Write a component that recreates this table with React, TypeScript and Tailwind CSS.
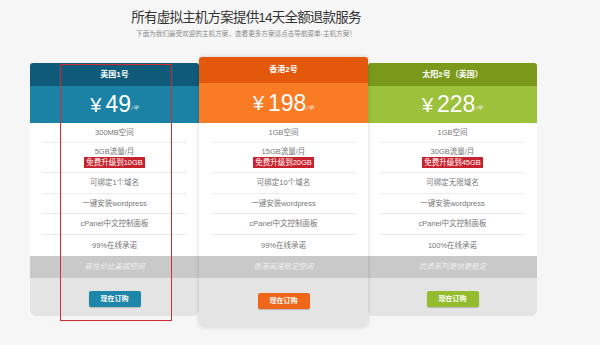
import React from 'react';

interface Plan {
  name: string;
  price: string;
  space: string;
  traffic: string;
  upgrade: string;
  domains: string;
  uptime: string;
  slogan: string;
  featured?: boolean;
  headerBg: string;
  priceBg: string;
  buttonBg: string;
}

const plans: Plan[] = [
  {
    name: '美国1号',
    price: '49',
    space: '300MB空间',
    traffic: '5GB流量/月',
    upgrade: '免费升级到10GB',
    domains: '可绑定1个域名',
    uptime: '99%在线承诺',
    slogan: '高性价比美国空间',
    headerBg: 'bg-[#0e5a78]',
    priceBg: 'bg-[#1b82a5]',
    buttonBg: 'bg-[#1e86a8]',
  },
  {
    name: '香港2号',
    price: '198',
    space: '1GB空间',
    traffic: '15GB流量/月',
    upgrade: '免费升级到20GB',
    domains: '可绑定10个域名',
    uptime: '99%在线承诺',
    slogan: '香港高速稳定空间',
    featured: true,
    headerBg: 'bg-[#e3580a]',
    priceBg: 'bg-[#f97b24]',
    buttonBg: 'bg-[#f0661a]',
  },
  {
    name: '太阳2号（美国）',
    price: '228',
    space: '1GB空间',
    traffic: '30GB流量/月',
    upgrade: '免费升级到45GB',
    domains: '可绑定无限域名',
    uptime: '100%在线承诺',
    slogan: '优质系列更快更稳定',
    headerBg: 'bg-[#7a991b]',
    priceBg: 'bg-[#9cc13b]',
    buttonBg: 'bg-[#93bc2e]',
  },
];

function PlanCard({ plan }: { plan: Plan }) {
  const f = plan.featured;
  return (
    <div
      className={`flex flex-col overflow-hidden rounded-t-[3px] rounded-b-[6px] ${
        f ? 'w-[169px] relative z-10 shadow-[0_0_4px_rgba(0,0,0,0.18)]' : 'w-[169px] mt-[6px]'
      }`}
    >
      {/* header */}
      <div className={`${plan.headerBg} ${f ? 'h-[26px]' : 'h-[23px]'} flex items-center justify-center text-white text-[8px] font-bold`}>
        {plan.name}
      </div>

      {/* price */}
      <div className={`${plan.priceBg} ${f ? 'h-[40px]' : 'h-[37px]'} flex items-center justify-center text-white`}>
        <span className="text-[20px] leading-none">¥</span>
        <span className="text-[23px] leading-none ml-[4px]">{plan.price}</span>
        <span className="text-[6px] italic self-end mb-[10px] opacity-80">/年</span>
      </div>

      {/* features */}
      <div className="bg-white px-[12px] text-[7.5px] text-[#777]">
        <div className="h-[20px] flex items-center justify-center border-b border-[#ebebeb]">{plan.space}</div>
        <div className="h-[30px] flex flex-col items-center justify-center border-b border-[#ebebeb] leading-[10px]">
          <span>{plan.traffic}</span>
          <span className="bg-[#c7232e] text-white px-[2px] leading-[11px]">{plan.upgrade}</span>
        </div>
        <div className="h-[21px] flex items-center justify-center border-b border-[#ebebeb]">{plan.domains}</div>
        <div className="h-[20px] flex items-center justify-center border-b border-[#ebebeb]">一键安装wordpress</div>
        <div className="h-[21px] flex items-center justify-center border-b border-[#ebebeb]">cPanel中文控制面板</div>
        <div className="h-[21px] flex items-center justify-center">{plan.uptime}</div>
      </div>

      {/* slogan band */}
      <div className="h-[22px] bg-[#c9c9c9] flex items-center justify-center text-[7.5px] italic text-[#eeeeee]">
        {plan.slogan}
      </div>

      {/* order */}
      <div className={`bg-[#e4e4e4] flex justify-center ${f ? 'h-[49px] pt-[15px]' : 'h-[38px] pt-[13px]'}`}>
        <button className={`${plan.buttonBg} h-[16px] w-[52px] rounded-[2px] text-white text-[7px] font-bold shadow-[0_1px_1px_rgba(0,0,0,0.2)]`}>
          现在订购
        </button>
      </div>
    </div>
  );
}

export default function App() {
  return (
    <div
      className="w-[600px] h-[345px] bg-[#f6f6f6] overflow-hidden"
      style={{ fontFamily: '"Liberation Sans", "Noto Sans CJK SC", sans-serif' }}
    >
      <div className="w-[490px] ml-[1px] pt-[9px] flex flex-col items-center">
        <h1 className="text-[13.5px] leading-[17px] tracking-[-0.8px] text-[#333]">所有虚拟主机方案提供14天全额退款服务</h1>
        <p className="mt-[3px] text-[6.6px] leading-[10px] text-[#8a8a8a]">
          下面为我们最受欢迎的主机方案，查看更多方案请点击导航菜单-主机方案！
        </p>
      </div>

      <div className="relative flex items-start pl-[30px] mt-[18px]">
        {plans.map((p) => (
          <PlanCard key={p.name} plan={p} />
        ))}
        {/* highlight box */}
        <div className="absolute left-[60px] top-[7px] w-[112px] h-[257px] border-[1.5px] border-[#d42a33] z-20 pointer-events-none" />
      </div>
    </div>
  );
}
